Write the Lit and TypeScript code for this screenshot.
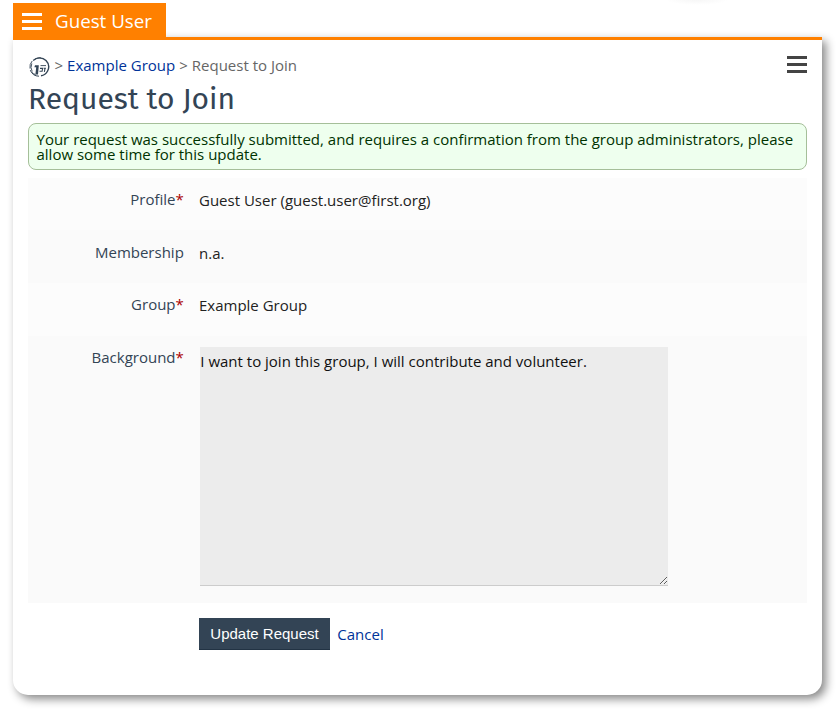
import { LitElement, html, css, svg, nothing } from "lit";
import { customElement } from "lit/decorators.js";

const menuIcon = svg`<path d="M0 0h20v3H0zM0 7h20v3H0zM0 14h20v3H0z" fill="currentColor"/>`;

@customElement("app-root")
export class AppRoot extends LitElement {
  static styles = css`
    :host {
      display: block;
      box-sizing: border-box;
      height: 713px;
      padding: 3px 14px 0 13px;
      overflow: hidden;
      background: radial-gradient(ellipse 32px 6px at 697px -1px, #f5f5f5, #fff);
      font: 15px/15px "Open Sans", sans-serif;
      color: #222;
    }
    * { box-sizing: border-box; }
    a { color: #039; text-decoration: none; }
    .tab {
      display: flex;
      align-items: center;
      width: 153px;
      height: 34px;
      padding: 3px 0 0 9px;
      gap: 13px;
      background: #ff8000;
      color: #fff;
      font-size: 18.75px;
      line-height: 24px;
      white-space: nowrap;
      position: relative;
    }
    .tab span { margin-top: -1px; }
    .card {
      height: 658px;
      padding: 15px 15px 0;
      border-top: 3px solid #ff8000;
      border-radius: 0 0 15px 15px;
      background: #fff;
      box-shadow: 4px 4px 10px #888;
    }
    .top {
      display: flex;
      justify-content: space-between;
      height: 26px;
      padding: 1px 0 0 1px;
      color: #666;
    }
    .crumbs { display: flex; gap: 4px; line-height: 18px; white-space: nowrap; }
    .crumbs a:first-child { margin-right: 0.5px; }
    .logo { margin-top: 0.5px; }
    .menu { color: #444; margin-right: -0.4px; }
    h1 {
      margin: 0 0 0 1px;
      height: 42px;
      font: 400 30px/36px "Fira Sans", "Noto Sans", sans-serif;
      text-indent: -1px;
      color: #345;
      white-space: nowrap;
    }
    .notice {
      width: 779px;
      height: 47px;
      margin-bottom: 8px;
      padding: 8px 8px 8px 7.5px;
      border: 1px solid #a5bf99;
      border-radius: 8px;
      background: #efe;
      color: #030;
    }
    .row {
      display: flex;
      height: 53px;
      width: 779px;
      background: #fcfcfc;
    }
    .row.alt { background: #fafafa; }
    .row.first { height: 52px; }
    .row.tall { height: 267px; }
    .label {
      width: 156px;
      padding: 14px 0.2px 0 0;
      margin-right: 15px;
      text-align: right;
      color: #345;
    }
    .req { color: #a00; }
    .value { padding-top: 15px; }
    .mid .label { padding-top: 15px; }
    .mid .value { padding-top: 16px; }
    textarea {
      display: block;
      width: 468px;
      height: 239px;
      margin: 11px 0 0 1px;
      padding: 4px 0 4px 0.3px;
      border: 0;
      border-bottom: 1px solid #ccc;
      outline: 0;
      background: #ececec;
      color: #111;
      font: 15px/21px "Open Sans", sans-serif;
    }
    .actions { display: flex; gap: 7.3px; padding: 15px 0 0 171px; line-height: 33px; }
    button {
      width: 131px;
      height: 32px;
      padding: 0;
      border: 0;
      border-bottom: 1px solid #234;
      background: #345;
      color: #fff;
      font: 15px "Liberation Sans", sans-serif;
      white-space: nowrap;
    }
  `;

  private row(label: string, value: unknown, required = true, kind = "") {
    return html`<div class="row ${kind}">
      <div class="label">${label}${required ? html`<span class="req">*</span>` : nothing}</div>
      ${value}
    </div>`;
  }

  render() {
    return html`
      <div class="tab">
        <svg width="20" height="18" viewBox="0 0 20 18">${menuIcon}</svg>
        <span>Guest User</span>
      </div>
      <main class="card">
        <div class="top">
          <nav class="crumbs">
            <a href="#" aria-label="Home"><svg class="logo" width="21" height="20" viewBox="0 0 21 20" fill="none" stroke="#345">
              <path d="M4.2 3.4A9 9 0 0 1 17 3.6A9 9 0 0 1 18.6 14A9.2 9.2 0 0 1 12 18.8" stroke-width="1.4"/>
              <path d="M3.2 4A9 9 0 0 0 1 11.5M2.8 6.5A9 9 0 0 0 3.2 14.5M6 2.3A8.5 8.5 0 0 1 12 .9" stroke-width=".9"/>
              <path d="M1.3 13.2A9.4 9.4 0 0 0 10 19.2M3 15.5A8 8 0 0 0 6.5 17.6" stroke-width="1"/>
              <path d="M6 8.2H9.8L9 17.6H6.4L7.2 10.2H5.4z" fill="#345" stroke="none"/>
              <path d="M11.5 8.6h5.5" stroke-width=".9"/>
              <path d="M11 11.4h2.6l-.5 2.9h-2.6M14.7 11.3h2.2M16 11.3l-.6 3.5" stroke-width="1.1"/>
            </svg></a>
            <span>&gt;</span><a href="#">Example Group</a><span>&gt;</span><span>Request to Join</span>
          </nav>
          <svg class="menu" width="20" height="18" viewBox="0 0 20 18">${menuIcon}</svg>
        </div>
        <h1>Request to Join</h1>
        <div class="notice">Your request was successfully submitted, and requires a confirmation from the group administrators, please allow some time for this update.</div>
        ${this.row("Profile", html`<div class="value">Guest User (guest.user@first.org)</div>`, true, "first")}
        ${this.row("Membership", html`<div class="value">n.a.</div>`, false, "alt mid")}
        ${this.row("Group", html`<div class="value">Example Group</div>`)}
        ${this.row("Background", html`<textarea spellcheck="false" .value=${"I want to join this group, I will contribute and volunteer."}></textarea>`, true, "alt tall")}
        <div class="actions"><button>Update Request</button><a href="#">Cancel</a></div>
      </main>
    `;
  }
}
